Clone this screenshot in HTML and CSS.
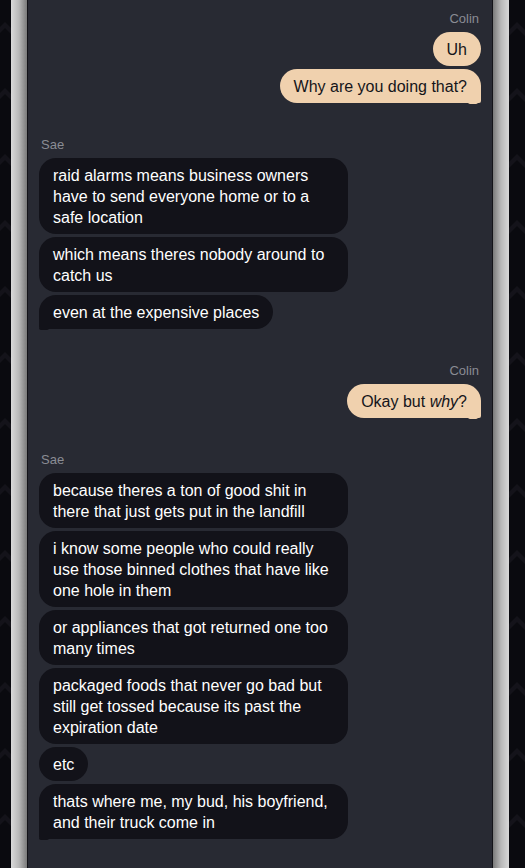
FILE: index.html
```html
<!DOCTYPE html>
<html lang="en">
<head>
<meta charset="utf-8">
<title>Chat</title>
<link rel="stylesheet" href="styles.css">
</head>
<body>
<div class="shell">
  <main class="panel">
    <section class="group out">
      <div class="name">Colin</div>
      <div class="bubble">Uh</div>
      <div class="bubble tail">Why are you doing that?</div>
    </section>
    <section class="group in">
      <div class="name">Sae</div>
      <div class="bubble">raid alarms means business owners have to send everyone home or to a safe location</div>
      <div class="bubble">which means theres nobody around to catch us</div>
      <div class="bubble tail">even at the expensive places</div>
    </section>
    <section class="group out">
      <div class="name">Colin</div>
      <div class="bubble tail">Okay but <em>why</em>?</div>
    </section>
    <section class="group in">
      <div class="name">Sae</div>
      <div class="bubble">because theres a ton of good shit in there that just gets put in the landfill</div>
      <div class="bubble">i know some people who could really use those binned clothes that have like one hole in them</div>
      <div class="bubble">or appliances that got returned one too many times</div>
      <div class="bubble">packaged foods that never go bad but still get tossed because its past the expiration date</div>
      <div class="bubble">etc</div>
      <div class="bubble tail">thats where me, my bud, his boyfriend, and their truck come in</div>
    </section>
  </main>
</div>
</body>
</html>
```

FILE: styles.css
```css
html, body {
  margin: 0;
  height: 100%;
}

body {
  background-color: #0a0a0f;
  background-image: url("data:image/svg+xml,%3Csvg xmlns='http://www.w3.org/2000/svg' width='32' height='66'%3E%3Cpath d='M0 30 L8 22 L16 30 L16 36 L8 28 L0 36Z' fill='%2314131a'/%3E%3C/svg%3E");
  background-position: -3px 0;
  font-family: "Liberation Sans", Arial, sans-serif;
  overflow: hidden;
}

/* framed column with shaded side rails */
.shell {
  box-sizing: border-box;
  width: 498px;
  min-height: 100%;
  margin-left: 11px;
  padding: 0 16px;
  background: linear-gradient(to right,
    #dadada 0, #b8b8b8 8px, #7a7a7a 16px,
    transparent 16px, transparent calc(100% - 16px),
    #7a7a7a calc(100% - 16px), #b8b8b8 calc(100% - 8px), #d8d8d8 100%);
  display: flex;
}

.panel {
  flex: 1;
  background: #282a33;
  border-left: 1px solid #131318;
  border-right: 1px solid #131318;
  padding: 12px 11px 0 11px;
  display: flex;
  flex-direction: column;
  gap: 35px;
}

.group {
  display: flex;
  flex-direction: column;
  gap: 3px;
}

.group.out { align-items: flex-end; }
.group.in { align-items: flex-start; }

.name {
  font-size: 13px;
  line-height: 13px;
  color: #8a8c94;
  margin-bottom: 4px;
  padding: 0 2px;
}

.bubble {
  position: relative;
  box-sizing: border-box;
  max-width: 70%;
  padding: 6.5px 14px;
  font-size: 16px;
  line-height: 21px;
  border-radius: 17px;
}

.out .bubble {
  background: #f0d1ae;
  color: #15151a;
}

.in .bubble {
  background: #121219;
  color: #ffffff;
}

.bubble em { font-style: italic; }

/* last bubble of a run keeps a small tail at the corner */
.out .bubble.tail { border-bottom-right-radius: 2px; }
.in .bubble.tail { border-bottom-left-radius: 2px; }

.bubble.tail::after {
  content: "";
  position: absolute;
  bottom: -1px;
  width: 10px;
  height: 2px;
  border-radius: 0 0 4px 4px;
}

.out .bubble.tail::after {
  right: 3px;
  background: #f0d1ae;
}

.in .bubble.tail::after {
  left: 0;
  background: #121219;
}
```
